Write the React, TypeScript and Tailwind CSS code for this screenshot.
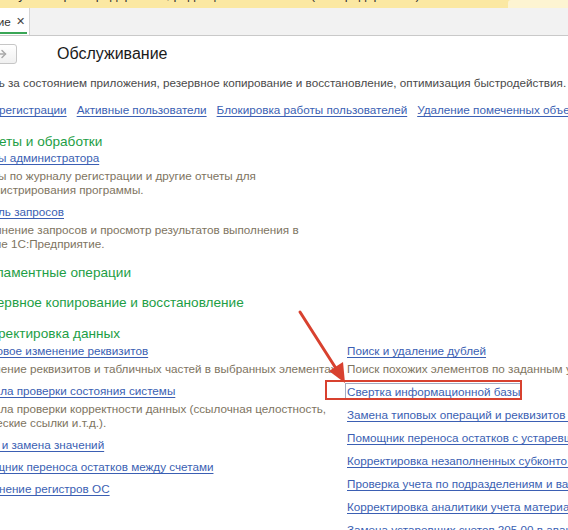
import { ArrowRight } from "lucide-react";

type Item = { title: string; desc?: string[]; boxed?: boolean };

const LINK = "text-[#3b5fb3] underline underline-offset-[2px] decoration-[#3b5fb3] whitespace-nowrap";
const DESC = "text-[#7e745f] leading-[14px] whitespace-nowrap";
const HEAD = "ml-[-25px] text-[13.6px] leading-[18px] text-[#1d9e45] whitespace-nowrap";

const TOP_LINKS = [
  "Журнал регистрации",
  "Активные пользователи",
  "Блокировка работы пользователей",
  "Удаление помеченных объектов",
];

const LEFT: Item[] = [
  {
    title: "Групповое изменение реквизитов",
    desc: ["Изменение реквизитов и табличных частей в выбранных элементах."],
  },
  {
    title: "Правила проверки состояния системы",
    desc: [
      "Правила проверки корректности данных (ссылочная целостность,",
      "логические ссылки и.т.д.).",
    ],
  },
  { title: "Поиск и замена значений" },
  { title: "Помощник переноса остатков между счетами" },
  { title: "Заполнение регистров ОС" },
];

const RIGHT: Item[] = [
  {
    title: "Поиск и удаление дублей",
    desc: ["Поиск похожих элементов по заданным условиям сравнения."],
  },
  { title: "Свертка информационной базы", boxed: true },
  { title: "Замена типовых операций и реквизитов объектов" },
  { title: "Помощник переноса остатков с устаревших счетов" },
  { title: "Корректировка незаполненных субконто в проводках" },
  { title: "Проверка учета по подразделениям и валютам" },
  { title: "Корректировка аналитики учета материалов" },
  { title: "Замена устаревших счетов 205.00 в авансовых отчетах" },
];

function Entry({ item }: { item: Item }) {
  return (
    <div className="flex flex-col">
      <span className="leading-[15px]">
        <span
          className={
            item.boxed
              ? LINK + " outline outline-1 outline-[#a3acc2] outline-offset-[1px]"
              : LINK
          }
        >
          {item.title}
        </span>
      </span>
      {item.desc && (
        <div className="mt-[4px] flex flex-col">
          {item.desc.map((d) => (
            <span key={d} className={DESC}>
              {d}
            </span>
          ))}
        </div>
      )}
    </div>
  );
}

export default function App() {
  return (
    <div className="relative w-[568px] h-[530px] overflow-hidden bg-white font-['Liberation_Sans',Arial,sans-serif] text-[11.7px]">
      {/* window caption strip */}
      <div className="h-[8px] bg-[#fbe8a2] flex overflow-hidden">
        <div className="flex-1 mt-[-13px] pl-[10px] text-[13px] leading-[15px] text-[#333] whitespace-nowrap">
          Бухгалтерия предприятия, редакция 3.0 / Иванов (1С:Предприятие)
        </div>
        <div className="w-[60px] bg-[#fdf4d2] rounded-tl-[3px]" />
      </div>

      {/* tabs */}
      <div className="h-[28px] bg-[#f2f2f2] border-b border-[#c9c9c9] flex">
        <div className="relative w-[30px] bg-white border-r border-[#d4d4d4] flex items-center overflow-hidden">
          <span className="ml-[-70px] text-[#333] whitespace-nowrap">Обслуживание</span>
          <span className="ml-[5px] text-[#444] text-[11px]">✕</span>
          <div className="absolute left-0 bottom-[1px] h-[2px] w-[27px] bg-[#3aa656]" />
        </div>
      </div>

      {/* header */}
      <div className="flex items-center mt-[8px] h-[20px]">
        <div className="ml-[-13px] w-[30px] h-[20px] rounded-[3px] border border-[#c6c6c6] bg-gradient-to-b from-white to-[#f0f0f0] flex items-center justify-center">
          <ArrowRight className="w-[12px] h-[12px] text-[#a9a9a9]" strokeWidth={3} />
        </div>
        <h1 className="ml-[40px] text-[16px] leading-[20px] text-[#1a1a1a]">Обслуживание</h1>
      </div>

      <div className="ml-[-46px] mt-[11px] leading-[15px] text-[#4a4a4a] whitespace-nowrap">
        Контроль за состоянием приложения, резервное копирование и восстановление, оптимизация быстродействия.
      </div>

      <div className="ml-[-47px] mt-[12px] flex gap-[10px] leading-[15px]">
        {TOP_LINKS.map((l) => (
          <span key={l} className={LINK}>
            {l}
          </span>
        ))}
      </div>

      {/* Отчеты и обработки */}
      <div className={HEAD + " mt-[16px] mb-[-1px]"}>Отчеты и обработки</div>
      <div className="ml-[-34px]">
        <Entry
          item={{
            title: "Отчеты администратора",
            desc: [
              "Отчеты по журналу регистрации и другие отчеты для",
              "администрирования программы.",
            ],
          }}
        />
        <div className="mt-[7px]">
          <Entry
            item={{
              title: "Консоль запросов",
              desc: [
                "Выполнение запросов и просмотр результатов выполнения в",
                "режиме 1С:Предприятие.",
              ],
            }}
          />
        </div>
      </div>

      <div className={HEAD + " mt-[13px]"}>Регламентные операции</div>
      <div className={HEAD + " mt-[12px]"}>Резервное копирование и восстановление</div>
      <div className={HEAD + " mt-[13px]"}>Корректировка данных</div>

      <div className="ml-[-34px] flex">
        <div className="w-[381px] shrink-0 flex flex-col gap-[7px] overflow-hidden pr-[17px]">
          {LEFT.map((it) => (
            <Entry key={it.title} item={it} />
          ))}
        </div>
        <div className="flex flex-col gap-[8px]">
          {RIGHT.map((it) => (
            <Entry key={it.title} item={it} />
          ))}
        </div>
      </div>

      {/* annotation */}
      <div className="absolute left-[325px] top-[380px] w-[197px] h-[20px] border-[2.5px] border-[#d8412f]" />
      <svg className="absolute left-0 top-0 pointer-events-none" width="568" height="530">
        <line x1="300" y1="312" x2="337" y2="370" stroke="#d8412f" strokeWidth="3" strokeLinecap="round" />
        <polygon points="345,383 329,371 343,362" fill="#d8412f" />
      </svg>
    </div>
  );
}
